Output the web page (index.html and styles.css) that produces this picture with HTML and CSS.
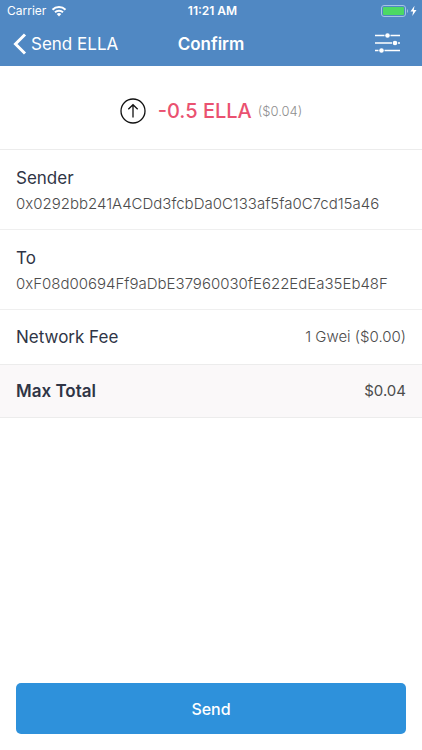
FILE: index.html
```html
<!DOCTYPE html>
<html lang="en">
<head>
<meta charset="utf-8">
<meta name="viewport" content="width=device-width, initial-scale=1">
<title>Confirm</title>
<link rel="stylesheet" href="styles.css">
</head>
<body>
<div class="screen">
  <header class="header">
    <div class="status">
      <div class="status-left">
        <span>Carrier</span>
        <svg width="16" height="12" viewBox="0 0 16 12" fill="none" stroke="#fff" stroke-width="2" aria-hidden="true">
          <path d="M1.5 4.7a9.2 9.2 0 0 1 13 0"/>
          <path d="M4 7.3a5.7 5.7 0 0 1 8 0"/>
          <path d="M8 11.5 5.7 9.1a3.3 3.3 0 0 1 4.6 0z" fill="#fff" stroke="none"/>
        </svg>
      </div>
      <time class="clock">11:21 AM</time>
      <div class="status-right">
        <svg width="38" height="12" viewBox="0 0 38 12" aria-hidden="true">
          <rect x="1.5" y=".5" width="24" height="11" rx="2.5" fill="none" stroke="#a5c4e5"/>
          <rect x="3" y="2" width="21" height="8" rx="1" fill="#4cd964"/>
          <path d="M27 4c1.3.5 1.3 3.5 0 4z" fill="#a5c4e5"/>
          <path d="M34.5.8 30.5 6.6h2.6l-.8 4.400 4.200-6h-2.700z" fill="#fff"/>
        </svg>
      </div>
    </div>
    <nav class="nav">
      <a class="back" href="#">
        <svg width="14" height="22" viewBox="0 0 14 22" fill="none" stroke="#fff" stroke-width="3" aria-hidden="true"><path d="M12 1.5 2.5 11l9.5 9.5"/></svg>
        <span>Send ELLA</span>
      </a>
      <h1 class="title">Confirm</h1>
      <button class="settings" type="button" aria-label="Advanced settings">
        <svg width="26" height="22" viewBox="0 0 26 22" aria-hidden="true">
          <path d="M0 2.5h9.500M15.500 2.500H25M0 10h17M23 10h2M0 17.500h3.500M9.500 17.500H25" stroke="#fff" stroke-width="1.300"/>
          <g fill="#fff"><circle cx="12.500" cy="2.500" r="2.300"/><circle cx="20" cy="10" r="2.300"/><circle cx="6.500" cy="17.500" r="2.300"/></g>
        </svg>
      </button>
    </nav>
  </header>
  <main class="content">
    <section class="amount">
      <svg width="26" height="26" viewBox="0 0 26 26" fill="none" stroke="#111" aria-hidden="true">
        <circle cx="13" cy="13" r="12" stroke-width="1.300"/>
        <path d="M13 19.500V7M8.300 11.200 13 6.700l4.700 4.500" stroke-width="1.300"/>
      </svg>
      <strong class="value">-0.5 ELLA</strong>
      <span class="fiat">($0.04)</span>
    </section>
    <dl class="details">
      <div class="address">
        <dt>Sender</dt>
        <dd>0x0292bb241A4CDd3fcbDa0C133af5fa0C7cd15a46</dd>
      </div>
      <div class="address">
        <dt>To</dt>
        <dd>0xF08d00694Ff9aDbE37960030fE622EdEa35Eb48F</dd>
      </div>
      <div class="line fee">
        <dt>Network Fee</dt>
        <dd>1 Gwei ($0.00)</dd>
      </div>
      <div class="line total">
        <dt>Max Total</dt>
        <dd>$0.04</dd>
      </div>
    </dl>
  </main>
  <footer class="footer">
    <button class="send" type="button">Send</button>
  </footer>
</div>
</body>
</html>
```
FILE: styles.css
```css
* {
  box-sizing: border-box;
}

body {
  margin: 0;
  background: #fff;
  color: #2f3546;
  font-family: Inter, "Liberation Sans", sans-serif;
}

.screen {
  display: flex;
  flex-direction: column;
  min-height: 100vh;
}

.header {
  background: #5088c3;
  color: #fff;
}

.status,
.nav {
  display: grid;
  grid-template-columns: minmax(0, 1fr) auto minmax(0, 1fr);
  align-items: center;
}

.status {
  height: 21px;
  padding: 0 4px 0 7px;
  font-size: 12px;
}

.status-left {
  display: flex;
  align-items: center;
  gap: 5px;
}

.clock {
  font-weight: 600;
}

.status-right {
  display: flex;
  justify-content: flex-end;
}

.nav {
  height: 45px;
  padding: 0 13px;
}

.back {
  display: flex;
  align-items: center;
  gap: 4px;
  color: #fff;
  font-size: 17px;
  text-decoration: none;
  white-space: nowrap;
}

.title {
  margin: 0;
  font-size: 17px;
  font-weight: 600;
}

.settings {
  display: flex;
  justify-self: end;
  padding: 0 8px;
  border: 0;
  background: none;
}

.content {
  flex: 1;
}

.amount {
  display: flex;
  align-items: center;
  justify-content: center;
  height: 84px;
  padding-top: 6px;
  border-bottom: 1px solid #ececec;
}

.value {
  margin: 0 6px 0 12px;
  color: #ea5170;
  font-size: 20px;
  font-weight: 500;
}

.fiat {
  color: #8e8e8e;
  font-size: 13px;
  font-weight: 300;
}

.details {
  margin: 0;
}

.details dt {
  font-size: 17px;
  line-height: 24px;
}

.details dd {
  margin: 0;
  color: #4c4c4c;
  font-size: 15px;
  font-weight: 300;
  line-height: 20px;
}

.address {
  padding: 16px 16px 15px;
  border-bottom: 1px solid #efefef;
}

.address dd {
  padding-top: 4px;
  white-space: nowrap;
}

.line {
  display: flex;
  align-items: center;
  justify-content: space-between;
  padding: 15px 16px;
  border-bottom: 1px solid #ececec;
}

.total {
  padding: 14px 16px;
  background: #faf8f9;
}

.total dt {
  font-weight: 600;
}

.details .total dd {
  font-weight: 400;
}

.footer {
  padding: 16px;
}

.send {
  width: 100%;
  height: 51px;
  border: 0;
  border-radius: 5px;
  background: #2e91db;
  color: #fff;
  font-family: inherit;
  font-size: 16px;
  font-weight: 500;
}
```
